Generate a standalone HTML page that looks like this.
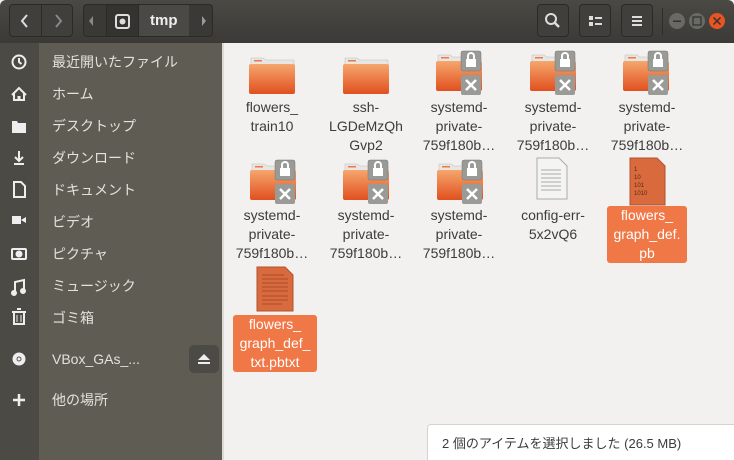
<!DOCTYPE html>
<html><head><meta charset="utf-8"><style>
*{margin:0;padding:0;box-sizing:border-box}
html,body{width:734px;height:460px;overflow:hidden}
body{font-family:"Liberation Sans","Noto Sans CJK JP",sans-serif;background:#f2f1f0;position:relative}
.hdr{position:absolute;left:0;top:0;width:734px;height:43px;background:linear-gradient(#4a4944,#3b3a36);border-radius:6px 6px 0 0}
.btn{position:absolute;top:4px;height:33px;border:1px solid #2a2a27;border-radius:4px;background:#403f3b}
.side{position:absolute;left:0;top:43px;width:223px;height:417px;background:#5f5d53}
.strip{position:absolute;left:0;top:43px;width:39px;height:417px;background:#4b4a44}
.it{position:absolute;left:52px;font-size:14px;color:#e2e1dc;line-height:18px}
.sep{position:absolute;left:222px;top:43px;width:2px;height:417px;background:#dcdad5}
.f{position:absolute;width:94px;text-align:center;font-size:14px;line-height:19px;color:#3c3c3c}
.sel span{background:#f07746;color:#fff;border-radius:3px;display:inline-block}
.status{position:absolute;left:427px;top:424px;width:310px;height:40px;background:#fff;border:1px solid #d5d3cf;border-radius:4px 0 0 0;font-size:13px;color:#3c3c3c;padding:8px 0 0 14px}
</style></head><body>
<div class="hdr"></div>
<div class="btn" style="left:9px;width:64px"><div style="position:absolute;left:31px;top:0;width:1px;height:31px;background:#2a2a27"></div>
<svg width="64" height="31" style="position:absolute;left:0;top:0"><path d="M17 10 L12 16 L17 22" stroke="#ddd" stroke-width="2" fill="none"/><path d="M46 10 L51 16 L46 22" stroke="#888" stroke-width="2" fill="none"/></svg></div>
<div class="btn" style="left:83px;width:130px;background:#3a3935">
<div style="position:absolute;left:22px;top:0;width:33px;height:31px;background:#34332f;border-left:1px solid #2a2a27;border-right:1px solid #2a2a27"></div>
<div style="position:absolute;left:55px;top:0;width:50px;height:31px;background:#4a4945"></div>
<svg width="130" height="31" style="position:absolute;left:0;top:0"><path d="M9 11 L5 16 L9 21Z" fill="#888"/><path d="M118 11 L122 16 L118 21Z" fill="#999"/><rect x="32" y="10" width="13" height="13" rx="2" fill="none" stroke="#ddd" stroke-width="2"/><circle cx="38.5" cy="16.5" r="3" fill="#ddd"/></svg>
<div style="position:absolute;left:66px;top:7px;font-size:15px;font-weight:bold;color:#eee">tmp</div></div>
<div class="btn" style="left:537px;width:32px"><svg width="30" height="31"><circle cx="13" cy="14" r="5" stroke="#ddd" stroke-width="2" fill="none"/><path d="M17 18 L21 22" stroke="#ddd" stroke-width="2.5"/></svg></div>
<div class="btn" style="left:579px;width:32px"><svg width="30" height="31"><rect x="9" y="11" width="4" height="4" fill="#ddd"/><rect x="9" y="17" width="4" height="4" fill="#ddd"/><rect x="15" y="12" width="7" height="2" fill="#ddd"/><rect x="15" y="18" width="7" height="2" fill="#ddd"/></svg></div>
<div class="btn" style="left:621px;width:32px"><svg width="30" height="31"><rect x="10" y="11" width="10" height="2" fill="#ddd"/><rect x="10" y="15" width="10" height="2" fill="#ddd"/><rect x="10" y="19" width="10" height="2" fill="#ddd"/></svg></div>
<div style="position:absolute;left:662px;top:8px;width:1px;height:27px;background:#2e2d2a"></div>
<svg width="70" height="43" style="position:absolute;left:664px;top:0"><circle cx="13" cy="21" r="8" fill="#6a6a65"/><rect x="9" y="20.5" width="8" height="1.5" fill="#333"/><circle cx="33" cy="21" r="8" fill="#6a6a65"/><rect x="29" y="17" width="8" height="8" fill="none" stroke="#333" stroke-width="1.3"/><circle cx="53" cy="21" r="8" fill="#e95420"/><path d="M49.5 17.5 L56.5 24.5 M56.5 17.5 L49.5 24.5" stroke="#333" stroke-width="1.5"/></svg>
<div class="side"></div><div class="strip"></div><div class="sep"></div>
<svg width="39" height="420" style="position:absolute;left:0;top:43px" fill="none" stroke="#eee" stroke-width="2">
<circle cx="19" cy="19" r="6.5"/><path d="M19 15v4l2.5 2"/>
<path d="M12 52 L19 45 L26 52 M14 50 v7 h10 v-7" /><rect x="17.5" y="53" width="3" height="4" fill="#eee" stroke="none"/>
<path d="M12 78 h5 l1 2 h8 v10 h-14z" fill="#eee" stroke="none"/>
<path d="M19 108 v10 M15 114 l4 4 l4 -4 M14 121 h10" />
<path d="M14 139 h7 l4 4 v11 h-11z"/>
<rect x="12" y="173" width="9" height="8" fill="#eee" stroke="none"/><path d="M21 177 l5 -3 v6z" fill="#eee" stroke="none"/>
<rect x="12" y="206" width="14" height="10" rx="1"/><circle cx="19" cy="211" r="2.5" fill="#eee"/>
<path d="M15 250 v-11 l9 -2 v11"/><circle cx="14" cy="250" r="2" fill="#eee"/><circle cx="23" cy="248" r="2" fill="#eee"/>
<path d="M12 269 h14 M14 269 v12 h10 v-12 M17 266 h4"/><path d="M17 272v7M21 272v7" stroke-width="1"/>
<circle cx="19" cy="316" r="6.5" fill="#eee" stroke="none"/><circle cx="19" cy="316" r="2" stroke="#555" stroke-width="1"/>
<path d="M19 351 v12 M13 357 h12" stroke-width="2.5"/>
</svg>
<div class="it" style="top:53px">最近開いたファイル</div>
<div class="it" style="top:85px">ホーム</div>
<div class="it" style="top:117px">デスクトップ</div>
<div class="it" style="top:149px">ダウンロード</div>
<div class="it" style="top:181px">ドキュメント</div>
<div class="it" style="top:213px">ビデオ</div>
<div class="it" style="top:245px">ピクチャ</div>
<div class="it" style="top:277px">ミュージック</div>
<div class="it" style="top:309px">ゴミ箱</div>
<div class="it" style="top:350px">VBox_GAs_...</div>
<div style="position:absolute;left:189px;top:345px;width:30px;height:28px;background:#4b4a44;border-radius:5px"><svg width="30" height="28"><path d="M15 9 l6 6 h-12z" fill="#eee"/><rect x="9" y="17" width="12" height="2" fill="#eee"/></svg></div>
<div class="it" style="top:391px">他の場所</div>

<svg width="734" height="460" style="position:absolute;left:0;top:0">
<defs><linearGradient id="g" x1="0" y1="0" x2="0" y2="1"><stop offset="0" stop-color="#f6a66e"/><stop offset="1" stop-color="#e0501e"/></linearGradient>
<g id="fold"><path d="M2 4 h12 l3 2 h28 v6 h-43z" fill="#e8e6e2" stroke="#bbb" stroke-width=".5"/><rect x="5" y="6" width="8" height="1.5" fill="#f07746"/><rect x="0" y="10" width="46" height="30" rx="2" fill="url(#g)"/></g>
<g id="lock"><use href="#fold"/><rect x="25" y="0" width="20" height="20" rx="2" fill="#9a9a96" stroke="#777" stroke-width=".5"/><rect x="30" y="8" width="10" height="8" fill="#fff"/><path d="M32 8 v-3 a3 3 0 0 1 6 0 v3" stroke="#fff" stroke-width="2" fill="none"/><rect x="25" y="24" width="20" height="20" rx="2" fill="#9a9a96"/><path d="M30 29 L40 39 M40 29 L30 39" stroke="#fff" stroke-width="2.5"/></g></defs>
<use href="#fold" x="249" y="54"/><use href="#fold" x="343" y="54"/>
<use href="#lock" x="436" y="51"/><use href="#lock" x="530" y="51"/><use href="#lock" x="623" y="51"/>
<use href="#lock" x="250" y="160"/><use href="#lock" x="343" y="160"/><use href="#lock" x="437" y="160"/>
<path d="M537 158 h22 l8 8 v33 h-30z" fill="#f4f4f2" stroke="#aaa"/>
<g stroke="#aaa" stroke-width="1"><path d="M541 170h20M541 174h20M541 178h20M541 182h20M541 186h20M541 190h20"/></g>
<path d="M630 158 h27 l8 8 v39 h-35z" fill="#d96a3e" stroke="#b0522a"/>
<text x="634" y="171" font-size="6" fill="#5a2a14" font-family="Liberation Sans">1</text><text x="634" y="179" font-size="6" fill="#5a2a14" font-family="Liberation Sans">10</text><text x="634" y="187" font-size="6" fill="#5a2a14" font-family="Liberation Sans">101</text><text x="634" y="195" font-size="6" fill="#5a2a14" font-family="Liberation Sans">1010</text>
<path d="M257 267 h28 l8 8 v36 h-36z" fill="#d96a3e" stroke="#b0522a"/>
<g stroke="#a84c28" stroke-width="1"><path d="M262 275h22M262 279h26M262 283h26M262 287h26M262 291h26M262 296h26M262 300h26M262 304h20"/></g>
</svg>
<div class="f" style="left:225px;top:98px">flowers_<br>train10</div>
<div class="f" style="left:319px;top:98px">ssh-<br>LGDeMzQh<br>Gvp2</div>
<div class="f" style="left:412px;top:98px">systemd-<br>private-<br>759f180b…</div>
<div class="f" style="left:506px;top:98px">systemd-<br>private-<br>759f180b…</div>
<div class="f" style="left:600px;top:98px">systemd-<br>private-<br>759f180b…</div>
<div class="f" style="left:225px;top:206px">systemd-<br>private-<br>759f180b…</div>
<div class="f" style="left:319px;top:206px">systemd-<br>private-<br>759f180b…</div>
<div class="f" style="left:412px;top:206px">systemd-<br>private-<br>759f180b…</div>
<div class="f" style="left:506px;top:206px">config-err-<br>5x2vQ6</div>
<div class="f sel" style="left:600px;top:206px"><span style="width:80px">flowers_<br>graph_def.<br>pb</span></div>
<div class="f sel" style="left:228px;top:315px"><span style="width:84px">flowers_<br>graph_def_<br>txt.pbtxt</span></div>
<div class="status">2 個のアイテムを選択しました (26.5 MB)</div>
</body></html>
